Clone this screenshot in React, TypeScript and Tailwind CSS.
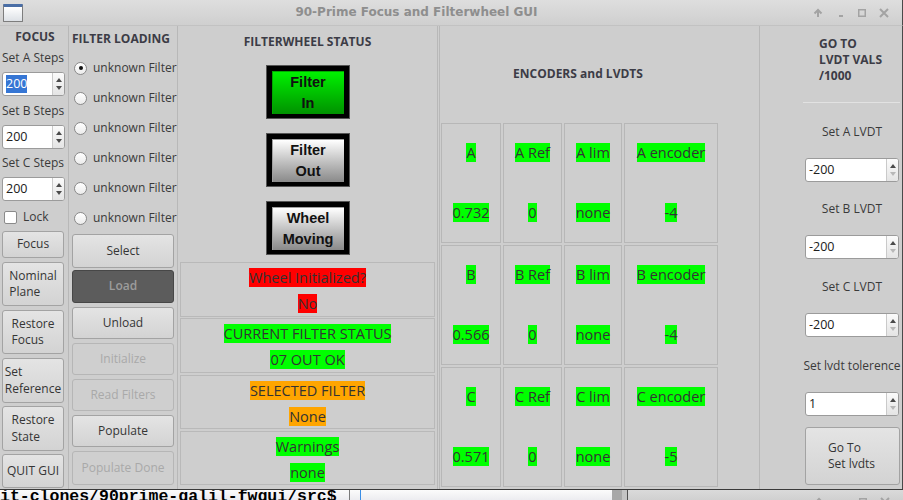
import React from 'react';

const label = 'text-[12px] leading-[16px] text-[#3a3a3a]';
const head = 'text-[12px] font-bold leading-[16px] text-[#3c3c46]';

type BtnProps = { children: React.ReactNode; className: string; off?: boolean; dark?: boolean };

const Btn: React.FC<BtnProps> = ({ children, className, off, dark }) => {
  let look = 'border-[#a3a3a3] bg-linear-to-b from-[#e4e4e4] to-[#d3d3d3] text-[#353535]';
  if (off) look = 'border-[#b6b6b6] bg-[#cfcfcf] text-[#a9a9a9]';
  if (dark) look = 'border-[#474747] bg-[#5c5c5c] font-semibold text-[#9c9c9c]';
  return (
    <div className={`flex items-center rounded-[3px] border text-[12px] leading-[16.5px] ${look} ${className}`}>
      {children}
    </div>
  );
};

const Spin: React.FC<{ value: string; className: string; sel?: boolean; dimDown?: boolean }> = ({ value, className, sel, dimDown }) => (
  <div className={`flex h-[24px] overflow-hidden rounded-[3px] border border-[#9b9b9b] bg-white ${className}`}>
    <div className="flex flex-1 items-center pl-[3px] text-[12.5px] text-[#202020]">
      <span className={sel ? 'bg-[#3676d4] text-white' : ''}>{value}</span>
    </div>
    <div className="flex w-[12px] flex-col items-center justify-center gap-[4px] border-l border-[#cacaca] bg-linear-to-b from-[#fbfbfb] to-[#e4e4e4]">
      <svg width="6" height="4"><path d="M0 4 L3 0 L6 4Z" fill="#4a4a4a" /></svg>
      <svg width="6" height="4"><path d="M0 0 L3 4 L6 0Z" fill={dimDown ? '#b8b8b8' : '#4a4a4a'} /></svg>
    </div>
  </div>
);

const Radio: React.FC<{ checked?: boolean }> = ({ checked }) => (
  <span className="flex h-[13px] w-[13px] items-center justify-center rounded-full border border-[#8a8a8a] bg-linear-to-b from-white to-[#ececec]">
    {checked && <span className="h-[4px] w-[4px] rounded-full bg-[#111]" />}
  </span>
);

const Lamp: React.FC<{ top: string; bottom: string; green?: boolean; className: string }> = ({ top, bottom, green, className }) => (
  <div className={`mx-auto h-[54px] w-[84px] border border-[#555] bg-black px-[5px] pt-[5px] pb-[4px] ${className}`}>
    <div
      className={`flex h-full flex-col items-center justify-center border-t border-l font-['Liberation_Sans',sans-serif] text-[14.5px] font-bold leading-[21px] text-[#111] ${
        green ? 'border-[#00a800] bg-linear-to-b from-[#00f200] to-[#009200]' : 'border-[#a0a0a0] bg-linear-to-b from-white to-[#8a8a8a]'
      }`}
    >
      <span>{top}</span>
      <span>{bottom}</span>
    </div>
  </div>
);

const Tag: React.FC<{ bg: string; children: React.ReactNode; className?: string }> = ({ bg, children, className = '' }) => (
  <span className={`h-[19px] text-[14.5px] leading-[19px] text-[#333] ${bg} ${className}`}>{children}</span>
);

const StatusBox: React.FC<{ bg: string; a: string; b: string; className: string }> = ({ bg, a, b, className }) => (
  <div className={`flex flex-col items-center border border-[#b9b9b9] pt-[5px] ${className}`}>
    <Tag bg={bg}>{a}</Tag>
    <Tag bg={bg} className="mt-[7px]">{b}</Tag>
  </div>
);

const WinButtons: React.FC<{ className?: string }> = ({ className = '' }) => (
  <svg width="95" height="26" className={className}>
    <g stroke="#a3a3a3" strokeWidth="2" fill="none">
      <path d="M11 17 V10 M7.5 13.5 L11 10 L14.5 13.5" />
      <path d="M73 9 L81 17 M81 9 L73 17" />
    </g>
    <rect x="32" y="15" width="4" height="2" fill="#a3a3a3" />
    <rect x="51.75" y="9.75" width="6.5" height="6.5" fill="none" stroke="#a3a3a3" strokeWidth="1.5" />
  </svg>
);

const encoders = [
  ['A', '0.732', 'A Ref', 'A lim', 'A encoder', '-4'],
  ['B', '0.566', 'B Ref', 'B lim', 'B encoder', '-4'],
  ['C', '0.571', 'C Ref', 'C lim', 'C encoder', '-5'],
];

const green = 'bg-[#00ff00]';

const Cell: React.FC<{ a: string; b: string }> = ({ a, b }) => (
  <div className="flex h-[120px] flex-col items-center border border-[#b7b7b7] pt-[19px]">
    <Tag bg={green}>{a}</Tag>
    <Tag bg={green} className="mt-[41px]">{b}</Tag>
  </div>
);

export default function App() {
  return (
    <div className="h-[500px] w-[903px] overflow-hidden bg-[#cecece] font-['Open_Sans',sans-serif]">
      {/* title bar */}
      <div className="flex h-[26px] border-r border-b border-[#c2c2c2] border-r-[#4a4a4a] bg-linear-to-b from-[#dedede] to-[#cfcfcf]">
        <div className="w-[26px] pt-[4px] pl-[3px]">
          <div className="h-[18px] w-[20px] rounded-[1px] border border-[#7d7d7d] border-t-[3px] border-t-[#4a6ea6] bg-linear-to-b from-white to-[#dde1e6]" />
        </div>
        <div className="flex-1 pt-[4px] text-center font-['DejaVu_Sans',sans-serif] text-[12px] font-bold leading-[17px] text-[#8e8e8e]">
          90-Prime Focus and Filterwheel GUI
        </div>
        <WinButtons />
      </div>

      <div className="flex h-[463px] border-r border-[#4a4a4a]">
        {/* FOCUS */}
        <div className="flex w-[69px] flex-col border-r border-[#b8b8b8] pl-[2px]">
          <div className={`mt-[3px] h-[16px] text-center ${head}`}>FOCUS</div>
          <div className={`mt-[5px] h-[16px] ${label}`}>Set A Steps</div>
          <Spin className="mt-[6px] w-[63px]" value="200" sel />
          <div className={`mt-[7px] h-[16px] ${label}`}>Set B Steps</div>
          <Spin className="mt-[6px] w-[63px]" value="200" />
          <div className={`mt-[6px] h-[16px] ${label}`}>Set C Steps</div>
          <Spin className="mt-[6px] w-[63px]" value="200" />
          <div className={`mt-[8px] flex h-[16px] items-center gap-[6px] pl-[2px] ${label}`}>
            <span className="h-[13px] w-[13px] rounded-[2px] border border-[#8a8a8a] bg-white" />
            <span>Lock</span>
          </div>
          <Btn className="mt-[6px] h-[27px] w-[62px] justify-center">Focus</Btn>
          <Btn className="mt-[4px] h-[44px] w-[62px] justify-center"><span className="text-left">Nominal<br />Plane</span></Btn>
          <Btn className="mt-[4px] h-[44px] w-[62px] justify-center"><span className="text-left">Restore<br />Focus</span></Btn>
          <Btn className="mt-[4px] h-[45px] w-[62px] justify-center"><span className="text-left">Set<br />Reference</span></Btn>
          <Btn className="mt-[3px] h-[45px] w-[62px] justify-center"><span className="text-left">Restore<br />State</span></Btn>
          <Btn className="mt-[3px] h-[34px] w-[62px] justify-center">QUIT GUI</Btn>
        </div>

        {/* FILTER LOADING */}
        <div className="flex w-[109px] flex-col overflow-hidden border-r border-[#b8b8b8] pl-[3px]">
          <div className={`mt-[5px] h-[16px] whitespace-nowrap ${head}`}>FILTER LOADING</div>
          <div className="mt-[6px] flex flex-col">
            {[true, false, false, false, false, false].map((c, i) => (
              <div key={i} className={`flex h-[30px] items-center gap-[6px] pl-[2px] whitespace-nowrap ${label}`}>
                <Radio checked={c} />
                <span>unknown Filter</span>
              </div>
            ))}
          </div>
          <Btn className="mt-[1px] h-[34px] w-[102px] justify-center">Select</Btn>
          <Btn className="mt-[2px] h-[33px] w-[102px] justify-center" dark>Load</Btn>
          <Btn className="mt-[4px] h-[32px] w-[102px] justify-center">Unload</Btn>
          <Btn className="mt-[4px] h-[32px] w-[102px] justify-center" off>Initialize</Btn>
          <Btn className="mt-[4px] h-[32px] w-[102px] justify-center" off>Read Filters</Btn>
          <Btn className="mt-[4px] h-[32px] w-[102px] justify-center">Populate</Btn>
          <Btn className="mt-[4px] h-[34px] w-[102px] justify-center" off>Populate Done</Btn>
        </div>

        {/* FILTERWHEEL STATUS */}
        <div className="flex w-[260px] flex-col border-r border-[#b8b8b8] px-[2px]">
          <div className={`mt-[8px] h-[16px] text-center ${head}`}>FILTERWHEEL STATUS</div>
          <Lamp className="mt-[15px]" top="Filter" bottom="In" green />
          <Lamp className="mt-[14px]" top="Filter" bottom="Out" />
          <Lamp className="mt-[14px]" top="Wheel" bottom="Moving" />
          <StatusBox className="mt-[7px] h-[55px]" bg="bg-[#ff0000]" a="Wheel Initialized?" b="No" />
          <StatusBox className="mt-[1px] h-[55px]" bg={green} a="CURRENT FILTER STATUS" b="07 OUT OK" />
          <StatusBox className="mt-[2px] h-[54px]" bg="bg-[#ffa500]" a="SELECTED FILTER" b="None" />
          <StatusBox className="mt-[2px] h-[54px]" bg={green} a="Warnings" b="none" />
        </div>

        {/* ENCODERS */}
        <div className="ml-[1px] w-[320px] border-l border-[#b8b8b8]">
          <div className="ml-[1px] w-[274px]">
            <div className={`mt-[40px] h-[16px] text-center ${head}`}>ENCODERS and LVDTS</div>
            <div className="mt-[41px] grid grid-cols-[60px_59px_58px_94px] gap-[2px]">
              {encoders.map(([n, v, r, l, e, ev]) => (
                <React.Fragment key={n}>
                  <Cell a={n} b={v} />
                  <Cell a={r} b="0" />
                  <Cell a={l} b="none" />
                  <Cell a={e} b={ev} />
                </React.Fragment>
              ))}
            </div>
          </div>
        </div>

        {/* GO TO LVDT */}
        <div className="flex w-[142px] flex-col border-l border-[#b8b8b8] pl-[43px]">
          <div className={`mt-[10px] pl-[16px] ${head} leading-[16.5px]`}>
            GO TO<br />LVDT VALS<br />/1000
          </div>
          <div className="mt-[18px] mr-[1px] h-[1px] bg-[#e2e2e2]" />
          <div className={`mt-[21px] h-[16px] text-center ${label}`}>Set A LVDT</div>
          <Spin className="mt-[18px] ml-[2px] w-[94px]" value="-200" dimDown />
          <div className={`mt-[19px] h-[16px] text-center ${label}`}>Set B LVDT</div>
          <Spin className="mt-[18px] ml-[2px] w-[94px]" value="-200" dimDown />
          <div className={`mt-[20px] h-[16px] text-center ${label}`}>Set C LVDT</div>
          <Spin className="mt-[18px] ml-[2px] w-[94px]" value="-200" dimDown />
          <div className={`mt-[21px] h-[16px] whitespace-nowrap text-center ${label}`}>Set lvdt tolerence</div>
          <Spin className="mt-[18px] ml-[2px] w-[94px]" value="1" dimDown />
          <Btn className="mt-[11px] ml-[2px] h-[58px] w-[95px] justify-start pl-[22px]">
            <span className="text-left">Go To<br />Set lvdts</span>
          </Btn>
        </div>
      </div>

      <div className="h-[1px] bg-[#3a3a3a]" />

      {/* terminal strip below */}
      <div className="flex h-[10px]">
        <div className="relative w-[612px] overflow-hidden bg-linear-to-b from-[#fbfbfb] to-[#ececf0]">
          <div className="-mt-[1px] whitespace-nowrap font-['Liberation_Mono',monospace] text-[16.5px] font-bold leading-[16px] text-black">
            it-clones/90prime-galil-fwgui/src$
          </div>
          <div className="absolute top-0 left-[349px] h-full w-[1px] bg-[#7a7a7a]" />
          <div className="absolute top-0 left-[360px] h-full w-[1px] bg-[#3a8ee6]" />
        </div>
        <div className="flex w-[16px] border-r border-[#505050]">
          <div className="w-[10px] bg-[#a8a8a8]" />
          <div className="w-[5px] bg-[#c4c4c4]" />
        </div>
        <div className="flex flex-1 justify-end overflow-hidden bg-linear-to-b from-[#dadada] to-[#d0d0d0]">
          <WinButtons className="-mt-[1px] shrink-0" />
        </div>
      </div>
    </div>
  );
}
